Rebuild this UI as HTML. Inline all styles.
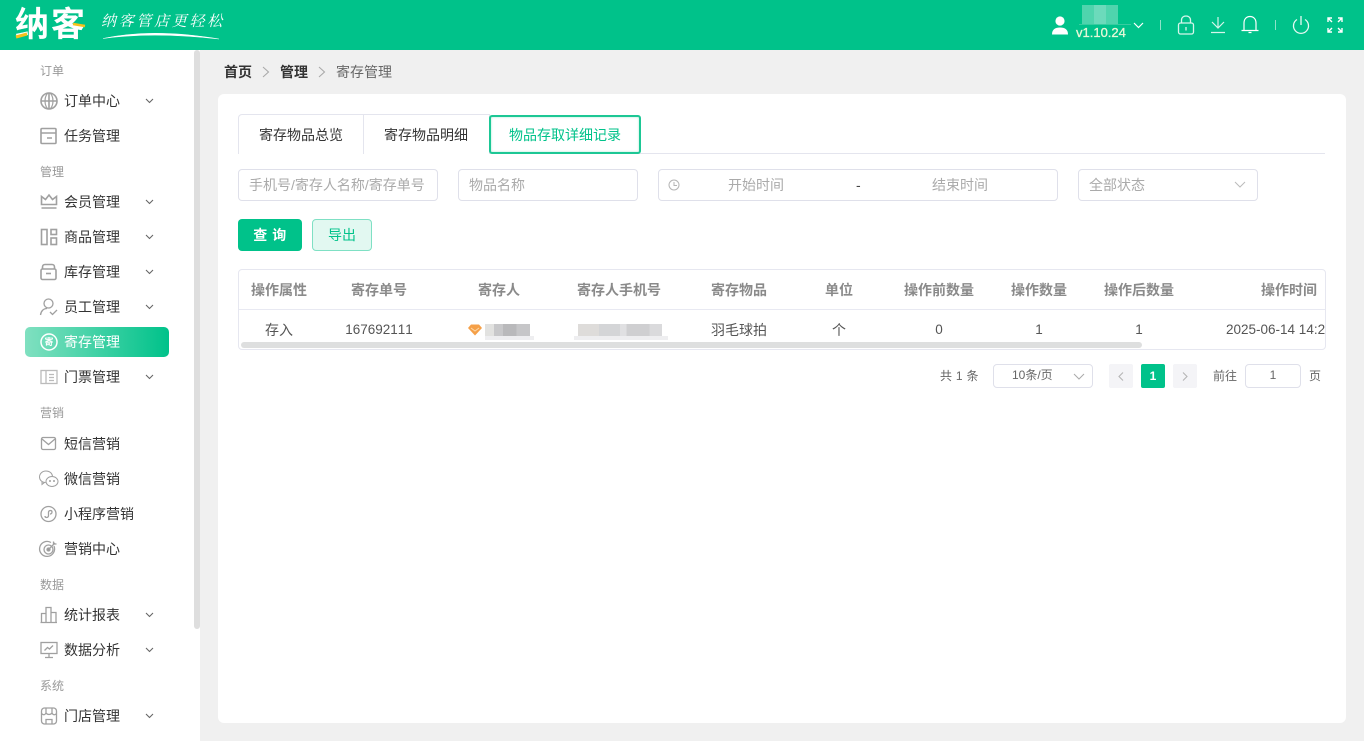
<!DOCTYPE html>
<html lang="zh"><head><meta charset="utf-8"><title>寄存管理</title>
<style>
*{box-sizing:border-box}
html,body{margin:0;padding:0;width:1364px;height:741px;overflow:hidden;background:#f0f0f0;font-family:"Liberation Sans","Noto Sans CJK SC",sans-serif;font-size:14px;color:#333}
.a{position:absolute;white-space:nowrap}
.t{position:absolute;white-space:nowrap;line-height:20px;height:20px;transform:translateY(-10px)}
.c{transform:translate(-50%,-10px)}
.lab{font-size:12px;color:#999;left:40px}
.m{left:64px;color:#333}
svg{position:absolute;overflow:visible;fill:none}
.ic{left:40px;width:18px;height:18px;stroke:#a0a0a0;stroke-width:1.6;transform:translateY(-9px)}
.ch{left:145px;width:9px;height:6px;stroke:#666;stroke-width:1.1;transform:translateY(-3px)}
.box{position:absolute;background:#fff;border:1px solid #dfe0ea;border-radius:4px}
.ph{color:#aaa}
.th{font-weight:700;color:#8a8a8a}
.td{color:#555}
.n{font-size:13.500px}
</style></head><body>

<div class="a" style="left:0;top:0;width:1364px;height:50px;background:#00c28a"></div>
<div class="t" style="left:15px;top:25px;height:34px;line-height:34px;transform:translateY(-17px);font-size:34px;font-weight:700;color:#fff;letter-spacing:2px">纳客</div>
<svg style="left:0;top:0;width:100px;height:50px"><path d="M16 37L27 34" stroke="#f6c21c" stroke-width="3"/><path d="M73 24L85 26" stroke="#f6c21c" stroke-width="2.500"/></svg>
<div class="t" style="left:101px;top:22px;font-size:15px;font-style:italic;color:#fff;letter-spacing:2.700px;font-family:'Liberation Serif','Noto Serif CJK SC',serif">纳客管店更轻松</div>
<svg style="left:100px;top:30px;width:125px;height:12px"><path d="M3 8.500C35 2 70 1 119 9C75 4 35 4 3 8.500Z" fill="#fff" stroke="#fff" stroke-width=".6"/></svg>

<svg style="left:1050px;top:16px;width:20px;height:20px" fill="#fff"><circle cx="10" cy="5" r="4.600" fill="#fff"/><path d="M2 18.500C2 13.500 5 11.500 10 11.500S18 13.500 18 18.500Z" fill="#fff"/></svg>
<div class="a" style="left:1082px;top:5px;width:36px;height:19px;background:#4fd4ad"></div>
<div class="a" style="left:1094px;top:5px;width:12px;height:19px;background:#6cdabb"></div>
<div class="a" style="left:1079px;top:24px;width:52px;height:1px;background:#38cca0"></div>
<div class="t" style="left:1076px;top:33px;font-size:13px;color:#e8f8d8;-webkit-text-stroke:.3px #e8f8d8">v1.10.24</div>
<svg style="left:1133px;top:22px;width:12px;height:7px" stroke="#fff" stroke-width="1.200"><path d="M1 1L5.500 5.500L10 1"/></svg>
<div class="a" style="left:1160px;top:20px;width:1px;height:10px;background:#8fe3c9"></div>
<svg style="left:1177px;top:15px;width:18px;height:20px" stroke="#d6f5eb" stroke-width="1.300"><rect x="1.500" y="8" width="15" height="11" rx="2"/><path d="M4.500 8V5C4.500 2.500 6.500 1 9 1S13.500 2.500 13.500 5V8M9 12V15.500"/></svg>
<svg style="left:1210px;top:16px;width:16px;height:18px" stroke="#d6f5eb" stroke-width="1.200"><path d="M8 1V11M2 6L8 12L14 6M1 16.500H15"/></svg>
<svg style="left:1241px;top:15px;width:18px;height:20px" stroke="#fff" stroke-width="1.200"><path d="M.500 15.500H17.500M3 15.500V8C3 4 5.500 1.500 9 1.500S15 4 15 8V15.500M7.500 17.500H10.500"/></svg>
<div class="a" style="left:1275px;top:20px;width:1px;height:10px;background:#8fe3c9"></div>
<svg style="left:1292px;top:15px;width:18px;height:20px" stroke="#e6f9f3" stroke-width="1.300"><path d="M5 4.500A7.500 7.500 0 1 0 13 4.500M9 1V10"/></svg>
<svg style="left:1327px;top:17px;width:16px;height:16px" stroke="#fff" stroke-width="1.400"><path d="M1 5V1H5M1 1L5 5M11 1H15V5M15 1L11 5M1 11V15H5M1 15L5 11M15 11V15H11M15 15L11 11"/></svg>

<div class="a" style="left:0;top:50px;width:200px;height:691px;background:#fff"></div>
<div class="a" style="left:194px;top:50px;width:6px;height:579px;background:#dedede;border-radius:3px"></div>

<div class="t lab" style="top:71px">订单</div>
<svg class="ic" style="top:101px"><circle cx="9" cy="9" r="8"/><path d="M1 9H17M9 1V17"/><ellipse cx="9" cy="9" rx="4" ry="8" stroke-width="1.200"/></svg>
<div class="t m" style="top:101px">订单中心</div><svg class="ch" style="top:101px"><path d="M1 1L4.500 4.500L8 1"/></svg>
<svg class="ic" style="top:136px"><rect x="1" y="1.500" width="15" height="15" rx="1"/><path d="M1 6H16M7 11H12"/></svg>
<div class="t m" style="top:136px">任务管理</div>

<div class="t lab" style="top:172px">管理</div>
<svg class="ic" style="top:202px"><path d="M1.500 11.500V3.500L5.500 6.500L9 2L12.500 6.500L16.500 3.500V11.500ZM1.500 15H16.500"/></svg>
<div class="t m" style="top:202px">会员管理</div><svg class="ch" style="top:202px"><path d="M1 1L4.500 4.500L8 1"/></svg>
<svg class="ic" style="top:237px"><rect x="1.500" y="1.500" width="5.500" height="15"/><rect x="11" y="1.500" width="5.500" height="5"/><rect x="11" y="10" width="5.500" height="6.500"/></svg>
<div class="t m" style="top:237px">商品管理</div><svg class="ch" style="top:237px"><path d="M1 1L4.500 4.500L8 1"/></svg>
<svg class="ic" style="top:272px"><path d="M2.500 6V4C2.500 2.500 3.500 1.500 5 1.500H12C13.500 1.500 14.500 2.500 14.500 4V6"/><rect x="1" y="6" width="15" height="10.500" rx="1.500"/><path d="M6 10.500H11"/></svg>
<div class="t m" style="top:272px">库存管理</div><svg class="ch" style="top:272px"><path d="M1 1L4.500 4.500L8 1"/></svg>
<svg class="ic" style="top:307px;stroke-width:1.300"><circle cx="8.500" cy="5.500" r="4.500"/><path d="M.500 17C1 13 3.500 10.500 7 10.500M10 14L12.500 16.500L17 12"/></svg>
<div class="t m" style="top:307px">员工管理</div><svg class="ch" style="top:307px"><path d="M1 1L4.500 4.500L8 1"/></svg>

<div class="a" style="left:25px;top:327px;width:144px;height:30px;border-radius:5px;background:linear-gradient(90deg,#80e0c0,#00c28a)"></div>
<svg style="left:40px;top:333px;width:18px;height:18px"><circle cx="9" cy="9" r="8" stroke="#fff" stroke-width="1.500"/></svg>
<div class="t c" style="left:49px;top:342px;font-size:9px;font-weight:700;color:#fff">寄</div>
<div class="t m" style="top:342px;color:#fff">寄存管理</div>

<svg class="ic" style="top:377px;stroke:#bbb;stroke-width:1.300"><rect x="1" y="2.500" width="16" height="13"/><path d="M6 3V15M9 6.500H14M9 9.500H14M9 12.500H14"/></svg>
<div class="t m" style="top:377px">门票管理</div><svg class="ch" style="top:377px"><path d="M1 1L4.500 4.500L8 1"/></svg>

<div class="t lab" style="top:413px">营销</div>
<svg class="ic" style="top:444px;stroke-width:1.300"><rect x="1.500" y="2.500" width="14" height="12" rx="1.500"/><path d="M2 4L8.500 9.500L15 4"/></svg>
<div class="t m" style="top:444px">短信营销</div>
<svg class="ic" style="top:479px;left:39px;stroke-width:1"><path d="M6.500 12.500C3 12.500 .500 10 .500 7S3 1 7 1C10.500 1 13 3 13.500 6M3 12L3 14.500L5.500 12.500"/><ellipse cx="13" cy="11.500" rx="6" ry="5"/><circle cx="11" cy="11" r=".5"/><circle cx="15" cy="11" r=".5"/></svg>
<div class="t m" style="top:479px">微信营销</div>
<svg class="ic" style="top:514px;stroke-width:1.300"><circle cx="8.500" cy="9" r="7.500"/><path d="M5 11C5 13 8 13 8.500 11V7C9 5 12 5 12 7S10 9 10 9"/></svg>
<div class="t m" style="top:514px">小程序营销</div>
<svg class="ic" style="top:549px;stroke-width:1.300"><path d="M14 6A7.500 7.500 0 1 1 11 2.500"/><circle cx="8.500" cy="9.500" r="4.500"/><circle cx="8.500" cy="9.500" r="1.500" fill="#999"/><path d="M9 9L15 3M13.500 1.500V4H16.500"/></svg>
<div class="t m" style="top:549px">营销中心</div>

<div class="t lab" style="top:585px">数据</div>
<svg class="ic" style="top:615px;stroke-width:1.300"><path d="M1.500 16V7.500H6V16M6 16V1.500H11V16M11 16V6.500H16V16M.500 16.500H17"/></svg>
<div class="t m" style="top:615px">统计报表</div><svg class="ch" style="top:615px"><path d="M1 1L4.500 4.500L8 1"/></svg>
<svg class="ic" style="top:650px;stroke-width:1.300"><rect x="1" y="1.500" width="16" height="11"/><path d="M4.500 9.500L7.500 6.500L9.500 8L13 4.500M9 12.500V16M5 16.500H13"/></svg>
<div class="t m" style="top:650px">数据分析</div><svg class="ch" style="top:650px"><path d="M1 1L4.500 4.500L8 1"/></svg>

<div class="t lab" style="top:686px">系统</div>
<svg class="ic" style="top:716px;stroke-width:1.300"><rect x="1.500" y="1" width="15" height="16" rx="3"/><path d="M1.500 6.500C3.500 8.500 5 8 6 6V1M6 6C7.500 8 10.500 8 12 6V1M12 6C13 8 15 8.500 16.500 6.500M6 17V12.500H12V17"/></svg>
<div class="t m" style="top:716px">门店管理</div><svg class="ch" style="top:716px"><path d="M1 1L4.500 4.500L8 1"/></svg>

<div class="t" style="left:224px;top:72px;font-weight:700;color:#333">首页</div>
<svg style="left:262px;top:66px;width:8px;height:12px" stroke="#aaa" stroke-width="1.100"><path d="M1 1L6.500 6L1 11"/></svg>
<div class="t" style="left:280px;top:72px;font-weight:700;color:#333">管理</div>
<svg style="left:318px;top:66px;width:8px;height:12px" stroke="#aaa" stroke-width="1.100"><path d="M1 1L6.500 6L1 11"/></svg>
<div class="t" style="left:336px;top:72px;color:#666">寄存管理</div>

<div class="a" style="left:218px;top:94px;width:1128px;height:629px;background:#fff;border-radius:6px"></div>

<div class="a" style="left:238px;top:153px;width:1087px;height:1px;background:#e4e5ee"></div>
<div class="a" style="left:238px;top:114px;width:252px;height:40px;border:1px solid #e4e5ee;border-bottom:0;border-radius:4px 0 0 0;background:#fff"></div>
<div class="a" style="left:363px;top:114px;width:1px;height:40px;background:#e4e5ee"></div>
<div class="a" style="left:489px;top:115px;width:152px;height:39px;border:2px solid #1dc795;border-radius:3px;background:#fff;box-shadow:inset 0 0 2px #a5e8d2"></div>
<div class="t c" style="left:301px;top:135px">寄存物品总览</div>
<div class="t c" style="left:426px;top:135px">寄存物品明细</div>
<div class="t c" style="left:565px;top:135px;color:#00c28a">物品存取详细记录</div>

<div class="box" style="left:238px;top:169px;width:200px;height:32px"></div>
<div class="t ph" style="left:249px;top:185px">手机号/寄存人名称/寄存单号</div>
<div class="box" style="left:458px;top:169px;width:180px;height:32px"></div>
<div class="t ph" style="left:469px;top:185px">物品名称</div>
<div class="box" style="left:658px;top:169px;width:400px;height:32px"></div>
<svg style="left:668px;top:179px;width:12px;height:12px" stroke="#b5b5b5"><circle cx="6" cy="6" r="5"/><path d="M6 3V6.500H9"/></svg>
<div class="t ph" style="left:728px;top:185px">开始时间</div>
<div class="t" style="left:856px;top:185px;color:#444">-</div>
<div class="t ph" style="left:932px;top:185px">结束时间</div>
<div class="box" style="left:1078px;top:169px;width:180px;height:32px"></div>
<div class="t ph" style="left:1089px;top:185px">全部状态</div>
<svg style="left:1234px;top:181px;width:12px;height:7px" stroke="#bbb"><path d="M1 1L6 6L11 1"/></svg>

<div class="a" style="left:238px;top:219px;width:64px;height:32px;background:#00c28a;border-radius:4px"></div>
<div class="t c" style="left:270px;top:235px;color:#fff;font-weight:700;letter-spacing:.5px">查 询</div>
<div class="a" style="left:312px;top:219px;width:60px;height:32px;background:#e2f8f1;border:1px solid #7fe0c4;border-radius:4px"></div>
<div class="t c" style="left:342px;top:235px;color:#00c28a">导出</div>

<div class="a" style="left:238px;top:269px;width:1088px;height:81px;border:1px solid #e6e7f0;border-radius:4px;background:#fff;overflow:hidden"></div>
<div class="a" style="left:239px;top:309px;width:1086px;height:1px;background:#e8e9f2"></div>

<div class="t th" style="left:251px;top:290px">操作属性</div>
<div class="t th c" style="left:379px;top:290px">寄存单号</div>
<div class="t th c" style="left:499px;top:290px">寄存人</div>
<div class="t th c" style="left:619px;top:290px">寄存人手机号</div>
<div class="t th c" style="left:739px;top:290px">寄存物品</div>
<div class="t th c" style="left:839px;top:290px">单位</div>
<div class="t th c" style="left:939px;top:290px">操作前数量</div>
<div class="t th c" style="left:1039px;top:290px">操作数量</div>
<div class="t th c" style="left:1139px;top:290px">操作后数量</div>
<div class="t th" style="left:1261px;top:290px">操作时间</div>

<div class="t td c" style="left:279px;top:330px">存入</div>
<div class="t td c n" style="left:379px;top:330px;font-kerning:none">167692111</div>
<svg style="left:468px;top:324px;width:14px;height:12px"><path d="M3 .500H11L14 4L7 11.500L0 4Z" fill="#f5a048"/><path d="M3 4L7 7L11 4" stroke="#fcd9a8" stroke-width="1"/></svg>
<div class="a" style="left:485px;top:324px;width:45px;height:14px;background:linear-gradient(90deg,#e2e2e0 0,#e2e2e0 20%,#c8c8ca 20%,#c8c8ca 40%,#b9b9bb 40%,#b9b9bb 70%,#c6c6c8 70%)"></div>
<div class="a" style="left:485px;top:336px;width:49px;height:4px;background:#eeeef0"></div>
<div class="a" style="left:578px;top:324px;width:84px;height:14px;background:linear-gradient(90deg,#dedcda 0,#dedcda 25%,#d4d5d7 25%,#d4d5d7 50%,#e0e0e2 50%,#e0e0e2 58%,#cfcfd1 58%,#cfcfd1 85%,#dadadc 85%)"></div>
<div class="a" style="left:574px;top:336px;width:94px;height:4px;background:#eeeef0"></div>
<div class="t td c" style="left:739px;top:330px">羽毛球拍</div>
<div class="t td c" style="left:839px;top:330px">个</div>
<div class="t td c n" style="left:939px;top:330px">0</div>
<div class="t td c n" style="left:1039px;top:330px">1</div>
<div class="t td c n" style="left:1139px;top:330px">1</div>
<div class="a td n" style="left:1226px;top:320px;width:99px;height:20px;line-height:20px;overflow:hidden">2025-06-14 14:25:30</div>
<div class="a" style="left:241px;top:342px;width:901px;height:6px;background:#dedfdf;border-radius:3px"></div>

<div class="t" style="left:940px;top:376px;font-size:12px;color:#666;letter-spacing:.3px">共 1 条</div>
<div class="box" style="left:993px;top:364px;width:100px;height:24px"></div>
<div class="t" style="left:1012px;top:375px;font-size:12px;color:#666">10条/页</div>
<svg style="left:1073px;top:373px;width:12px;height:7px" stroke="#aaa"><path d="M1 1L6 6L11 1"/></svg>
<div class="a" style="left:1109px;top:364px;width:24px;height:24px;background:#f4f4f7;border-radius:2px"></div>
<svg style="left:1118px;top:372px;width:7px;height:9px" stroke="#b5b5b5" stroke-width="1.100"><path d="M5 .500L1 4.500L5 8.500"/></svg>
<div class="a" style="left:1141px;top:364px;width:24px;height:24px;background:#00c28a;border-radius:2px;color:#fff;font-weight:700;font-size:12px;text-align:center;line-height:24px">1</div>
<div class="a" style="left:1173px;top:364px;width:24px;height:24px;background:#f4f4f7;border-radius:2px"></div>
<svg style="left:1182px;top:372px;width:7px;height:9px" stroke="#b5b5b5" stroke-width="1.100"><path d="M1 .500L5 4.500L1 8.500"/></svg>
<div class="t" style="left:1213px;top:376px;font-size:12px;color:#666">前往</div>
<div class="box" style="left:1245px;top:364px;width:56px;height:24px;text-align:center;line-height:21px;font-size:12px;color:#666">1</div>
<div class="t" style="left:1309px;top:376px;font-size:12px;color:#666">页</div>

</body></html>
